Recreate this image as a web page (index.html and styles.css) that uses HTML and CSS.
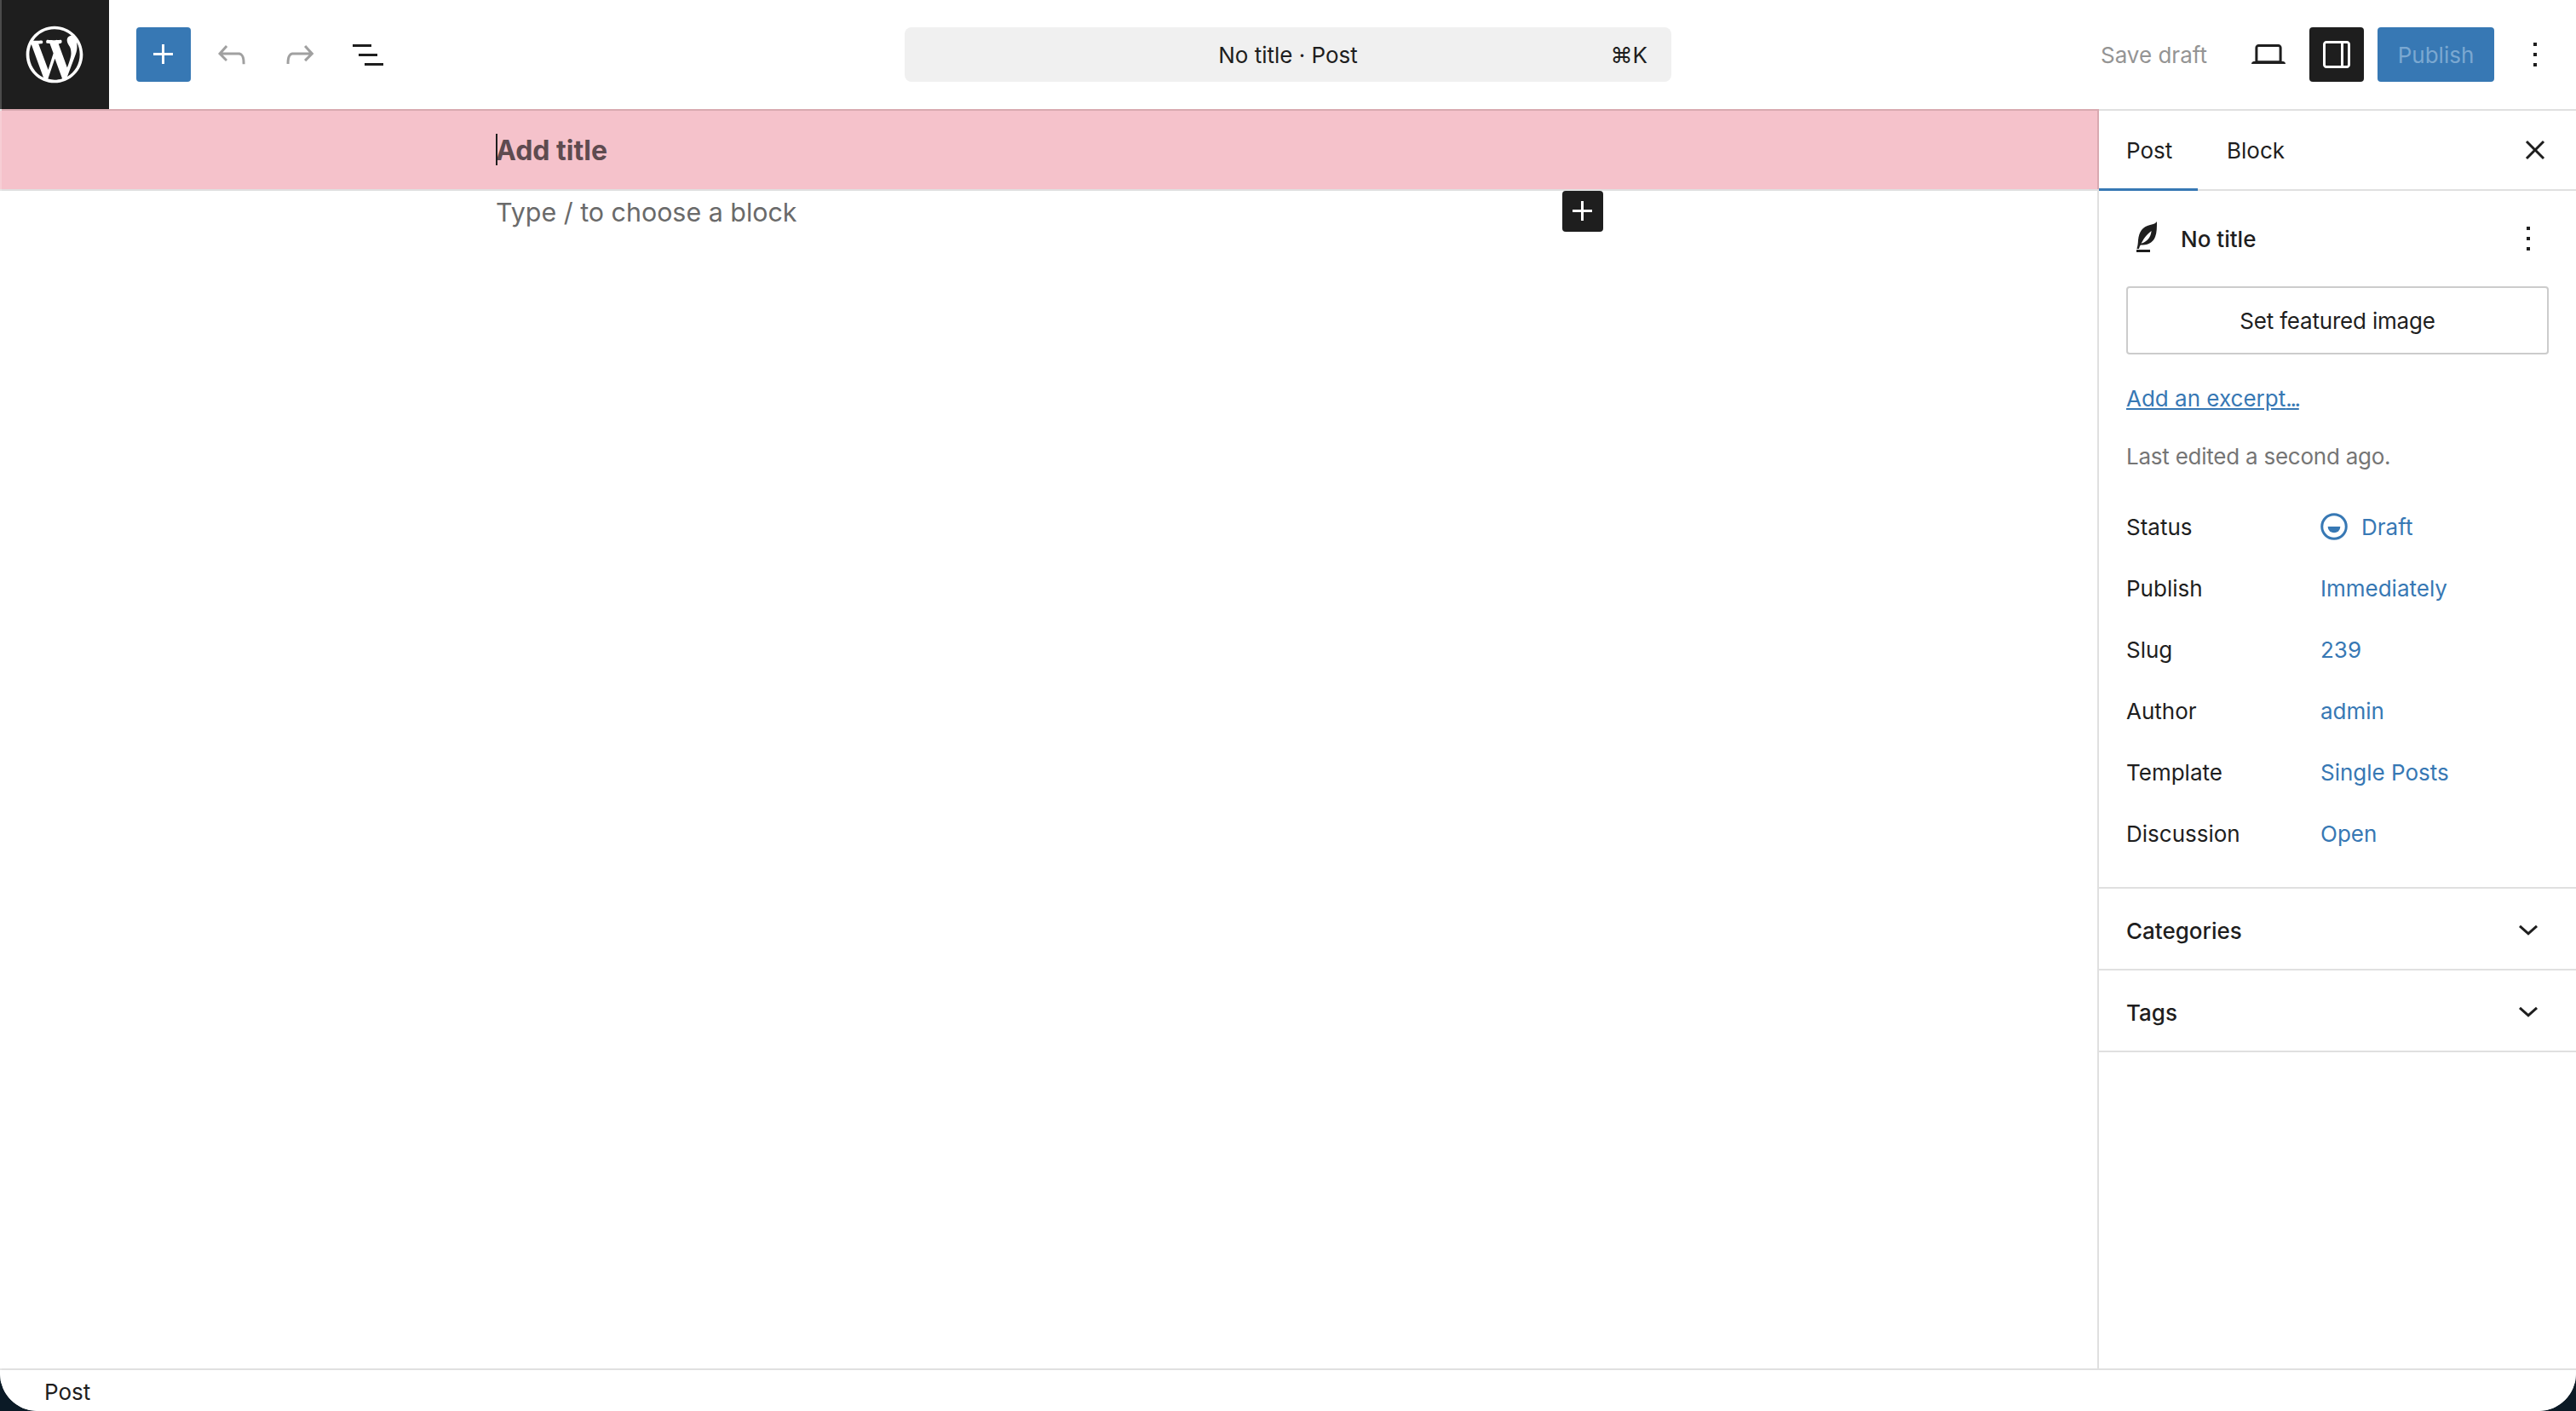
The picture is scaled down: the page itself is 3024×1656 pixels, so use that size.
FILE: index.html
```html
<!DOCTYPE html>
<html lang="en">
<head>
<meta charset="utf-8">
<title>No title · Post</title>
<link rel="stylesheet" href="styles.css">
</head>
<body>
<div class="app">
  <header class="topbar">
    <a class="wp-logo"><svg viewBox="-2 -2 24 24" width="80" height="80"><path fill="#fff" d="M20 10c0-5.51-4.49-10-10-10C4.48 0 0 4.49 0 10c0 5.52 4.48 10 10 10 5.51 0 10-4.48 10-10zM7.78 15.37L4.37 6.22c.55-.02 1.17-.08 1.17-.08.5-.06.44-1.13-.06-1.11 0 0-1.45.11-2.37.11-.18 0-.37 0-.58-.01C4.12 2.69 6.87 1.11 10 1.11c2.33 0 4.45.87 6.05 2.34-.68-.11-1.65.39-1.65 1.58 0 .74.45 1.36.9 2.1.35.61.55 1.36.55 2.46 0 1.49-1.4 5-1.4 5l-3.03-8.37c.54-.02.82-.17.82-.17.5-.05.44-1.25-.06-1.22 0 0-1.44.12-2.38.12-.87 0-2.33-.12-2.33-.12-.5-.03-.56 1.2-.06 1.22l.92.08 1.26 3.41zM17.41 10c.24-.64.74-1.87.43-4.25.7 1.29 1.05 2.71 1.05 4.25 0 3.29-1.73 6.24-4.4 7.78.97-2.59 1.94-5.2 2.92-7.78zM6.1 18.09C3.12 16.65 1.11 13.53 1.11 10c0-1.3.23-2.48.72-3.59C3.25 10.3 4.67 14.2 6.1 18.09zm4.03-6.63l2.58 6.98c-.86.29-1.76.45-2.71.45-.79 0-1.57-.11-2.29-.33.81-2.38 1.62-4.74 2.42-7.1z"/></svg></a>
    <div class="tools-left">
      <button class="icon-btn primary"><svg viewBox="0 0 24 24" width="48" height="48"><path fill="#fff" d="M11 12.5V17.5H12.5V12.5H17.5V11H12.5V6H11V11H6V12.5H11Z"/></svg></button>
      <button class="icon-btn muted"><svg viewBox="0 0 24 24" width="48" height="48"><path d="M18.3 11.7c-.6-.6-1.4-.9-2.3-.9H6.7l2.9-3.3-1.1-1-4.5 5L8.500 16l1-1-2.700-2.700H16c.5 0 .9.2 1.300.5 1 1 1 3.400 1 4.500v.3h1.500v-.2c0-1.500 0-4.300-1.500-5.700z"/></svg></button>
      <button class="icon-btn muted"><svg viewBox="0 0 24 24" width="48" height="48"><path d="M15.600 6.500l-1.100 1 2.900 3.300H8c-.9 0-1.700.3-2.300.9-1.400 1.500-1.400 4.200-1.400 5.600v.2h1.500v-.3c0-1.100 0-3.500 1-4.500.3-.3.7-.5 1.300-.5h9.200L14.500 15l1.100 1.100 4.600-4.600-4.600-5z"/></svg></button>
      <button class="icon-btn"><svg viewBox="0 0 24 24" width="48" height="48"><path d="M3 6h11v1.500H3V6Zm3.500 5.500h11V13h-11v-1.500ZM21 17H10v1.500h11V17Z"/></svg></button>
    </div>
    <div class="command-wrap">
      <div class="command-bar"><span>No title · Post</span><span class="command-key">⌘K</span></div>
    </div>
    <div class="tools-right">
      <span class="save-draft">Save draft</span>
      <button class="icon-btn"><svg viewBox="0 0 24 24" width="48" height="48"><path d="M20.500 16h-.7V8c0-1.100-.9-2-2-2H6.200c-1.100 0-2 .9-2 2v8h-.7c-.8 0-1.500.7-1.500 1.500h20c0-.8-.7-1.500-1.500-1.500zM5.700 8c0-.3.2-.5.5-.5h11.600c.3 0 .5.2.5.5v7.600H5.700V8z"/></svg></button>
      <button class="icon-btn dark"><svg viewBox="0 0 24 24" width="48" height="48"><path fill="#fff" d="M18 4H6c-1.100 0-2 .9-2 2v12c0 1.100.9 2 2 2h12c1.100 0 2-.9 2-2V6c0-1.100-.9-2-2-2zM6 18.500c-.3 0-.5-.2-.5-.5V6c0-.3.2-.5.5-.5h8.500v13H6zm12.500-.5c0 .3-.2.5-.5.5h-2v-13h2c.3 0 .5.2.5.5v12z"/></svg></button>
      <button class="publish">Publish</button>
      <button class="icon-btn"><svg viewBox="0 0 24 24" width="48" height="48"><path d="M13 19h-2v-2h2v2zm0-6h-2v-2h2v2zm0-6h-2V5h2v2z"/></svg></button>
    </div>
  </header>

  <div class="workspace">
    <main class="editor">
      <div class="title-band"><h1 class="post-title"><span class="caret"></span>Add title</h1></div>
      <div class="block-row">
        <p class="placeholder">Type / to choose a block</p>
        <button class="mini-add"><svg viewBox="0 0 24 24" width="48" height="48"><path fill="#fff" d="M11 12.500V17.500H12.500V12.500H17.500V11H12.500V6H11V11H6V12.500H11Z"/></svg></button>
      </div>
    </main>

    <aside class="sidebar">
      <div class="tabs">
        <span class="tab active">Post</span>
        <span class="tab">Block</span>
        <button class="icon-btn close"><svg viewBox="0 0 24 24" width="48" height="48"><path d="M12 13.060l4.470 4.470 1.060-1.060L13.060 12l4.470-4.470-1.060-1.060L12 10.940 7.530 6.470 6.470 7.530 10.940 12l-4.470 4.470 1.060 1.060L12 13.060Z"/></svg></button>
      </div>
      <section class="summary">
        <div class="doc-head">
          <svg class="feather" viewBox="0 0 24 24" width="48" height="48"><path d="M18 2c-.5 1-2 1.500-4 2-4.500 1-6.500 4-7 9-.1 2-.3 3.500-.8 5h1.300c.3-1 .5-1.700 1-2.200 3.500 0 7-.8 8.500-4.800 1-2.500 1-6 1-9Z"/><path fill="#fff" d="M8.800 14.900c1.400-2.900 3-5 6-7.400-.4 3.500-2 6.100-6 7.400Z"/><path d="M6 18.500h8V20H6z"/></svg>
          <span class="doc-title">No title</span>
          <button class="icon-btn doc-menu"><svg viewBox="0 0 24 24" width="48" height="48"><path d="M13 19h-2v-2h2v2zm0-6h-2v-2h2v2zm0-6h-2V5h2v2z"/></svg></button>
        </div>
        <button class="featured">Set featured image</button>
        <a class="excerpt">Add an excerpt<span class="dots">...</span></a>
        <p class="edited">Last edited a second ago.</p>
        <dl class="meta">
          <div class="meta-row"><dt>Status</dt><dd class="status"><svg viewBox="0 0 24 24" width="36" height="36"><circle cx="12" cy="12" r="9.500" fill="none" stroke="currentColor" stroke-width="2"/><path d="M7.100 12h9.800a4.900 4.900 0 0 1-9.800 0Z"/></svg>Draft</dd></div>
          <div class="meta-row"><dt>Publish</dt><dd>Immediately</dd></div>
          <div class="meta-row"><dt>Slug</dt><dd>239</dd></div>
          <div class="meta-row"><dt>Author</dt><dd>admin</dd></div>
          <div class="meta-row"><dt>Template</dt><dd>Single Posts</dd></div>
          <div class="meta-row"><dt>Discussion</dt><dd>Open</dd></div>
        </dl>
      </section>
      <div class="panel"><span>Categories</span><svg viewBox="0 0 24 24" width="48" height="48"><path d="M17.500 10l-5.500 4.900L6.500 10l1-1.100 4.500 4 4.500-4z"/></svg></div>
      <div class="panel"><span>Tags</span><svg viewBox="0 0 24 24" width="48" height="48"><path d="M17.500 10l-5.500 4.900L6.500 10l1-1.100 4.500 4 4.500-4z"/></svg></div>
    </aside>
  </div>

  <footer class="statusbar">Post</footer>
  <div class="window-edge"></div>
</div>
</body>
</html>
```

FILE: styles.css
```css
* { box-sizing: border-box; }
html, body { margin: 0; height: 100%; }
body {
  background: #0b1a26;
  font-family: Inter, "Liberation Sans", sans-serif;
  font-size: 26px;
  color: #1e1e1e;
  overflow: hidden;
}
button { font: inherit; border: 0; background: none; padding: 0; color: inherit; }
svg { display: block; fill: currentColor; flex: none; }
h1, p, dl, dd { margin: 0; }

.app {
  position: relative;
  height: 1656px;
  display: flex;
  flex-direction: column;
  background: #fff;
  border-radius: 0 0 44px 44px;
  overflow: hidden;
}

.topbar {
  height: 130px;
  flex: none;
  display: flex;
  align-items: flex-start;
  background: #fff;
  border-bottom: 2px solid #e0e0e0;
  position: relative;
}
.wp-logo {
  width: 128px;
  height: 128px;
  background: #1e1e1e;
  display: flex;
  align-items: center;
  justify-content: center;
  flex: none;
}
.icon-btn {
  width: 64px;
  height: 64px;
  border-radius: 4px;
  display: flex;
  align-items: center;
  justify-content: center;
  flex: none;
}
.tools-left {
  display: flex;
  align-items: center;
  gap: 16px;
  padding: 32px 0 0 32px;
}
.primary { background: #3778b4; }
.muted { color: #a0a0a0; }
.command-wrap {
  position: absolute;
  left: 1062px;
  top: 32px;
}
.command-bar {
  width: 900px;
  height: 64px;
  background: #f0f0f0;
  border-radius: 8px;
  display: flex;
  align-items: center;
  justify-content: center;
  position: relative;
}
.command-key {
  position: absolute;
  right: 28px;
  top: 50%;
  transform: translateY(-50%);
}
.tools-right {
  margin-left: auto;
  display: flex;
  align-items: center;
  gap: 16px;
  padding: 32px 16px 0 0;
}
.save-draft { color: #949494; margin-right: 24px; }
.dark { background: #1e1e1e; }
.publish {
  width: 137px;
  height: 64px;
  border-radius: 4px;
  background: #3778b4;
  color: #7ba8d1;
  flex: none;
}

.workspace { flex: 1; display: flex; min-height: 0; }
.editor { flex: 1; min-width: 0; position: relative; }
.title-band {
  height: 94px;
  padding-top: 1px;
  background: #f5c2cb;
  display: flex;
  align-items: center;
  border-bottom: 2px solid #e0e0e0;
  box-shadow: 2px -2px 0 #d8a9b0;
  position: relative;
}
.post-title {
  font-size: 32px;
  font-weight: 700;
  line-height: 1;
  margin-left: 582px;
  color: #5e4b50;
  position: relative;
}
.caret {
  position: absolute;
  left: 0;
  top: -4px;
  width: 2px;
  height: 37px;
  background: #1e1e1e;
}
.block-row {
  position: relative;
  padding-left: 582px;
  height: 50px;
  display: flex;
  align-items: center;
}
.placeholder { font-size: 30.4px; color: #6a6a6a; line-height: 1; }
.mini-add {
  position: absolute;
  left: 1834px;
  top: 0;
  width: 48px;
  height: 48px;
  background: #1e1e1e;
  border-radius: 4px;
  display: flex;
  align-items: center;
  justify-content: center;
}

.sidebar {
  width: 562px;
  flex: none;
  border-left: 2px solid #e0e0e0;
  background: #fff;
}
.tabs {
  height: 94px;
  display: flex;
  align-items: center;
  border-bottom: 2px solid #e0e0e0;
}
.tab {
  height: 92px;
  padding-left: 34px;
  display: flex;
  align-items: center;
  position: relative;
}
.tab.active {
  width: 116px;
  padding-left: 32px;
}
.tab.active::after {
  content: "";
  position: absolute;
  left: 0; right: 0; bottom: -2px;
  height: 3px;
  background: #3778b4;
}
.close { margin-left: auto; margin-right: 16px; }
.summary { padding: 28px 32px 0; height: 819px; border-bottom: 2px solid #e0e0e0; }
.doc-head { display: flex; align-items: center; height: 56px; }
.doc-title { font-weight: 500; margin-left: 16px; }
.doc-menu { margin-left: auto; margin-right: -8px; }
.featured {
  display: block;
  width: 100%;
  height: 80px;
  margin-top: 28px;
  border: 2px solid #ccc;
  border-radius: 4px;
  background: #fff;
  letter-spacing: -0.2px;
}
.excerpt {
  display: block;
  margin-top: 34px;
  line-height: 36px;
  color: #3778b4;
  text-decoration: underline;
}
.dots { letter-spacing: -2.3px; }
.edited { margin-top: 32px; line-height: 36px; color: #757575; letter-spacing: -0.24px; }
.meta { margin-top: 28px; }
.meta-row { display: flex; align-items: center; height: 72px; }
.meta-row dt { width: 228px; flex: none; }
.meta-row dd { color: #3778b4; }
.meta-row .status { display: flex; align-items: center; gap: 14px; margin-left: -2px; }
.panel {
  height: 96px;
  padding: 4px 32px 0;
  display: flex;
  align-items: center;
  justify-content: space-between;
  font-weight: 500;
  border-bottom: 2px solid #e0e0e0;
}

.statusbar {
  height: 50px;
  flex: none;
  border-top: 2px solid #e0e0e0;
  background: #fff;
  padding: 2px 0 0 52px;
  display: flex;
  align-items: center;
}
.window-edge {
  position: absolute;
  left: 0; top: 0; bottom: 0;
  width: 2px;
  background: rgba(255,255,255,.2);
  pointer-events: none;
}
```
